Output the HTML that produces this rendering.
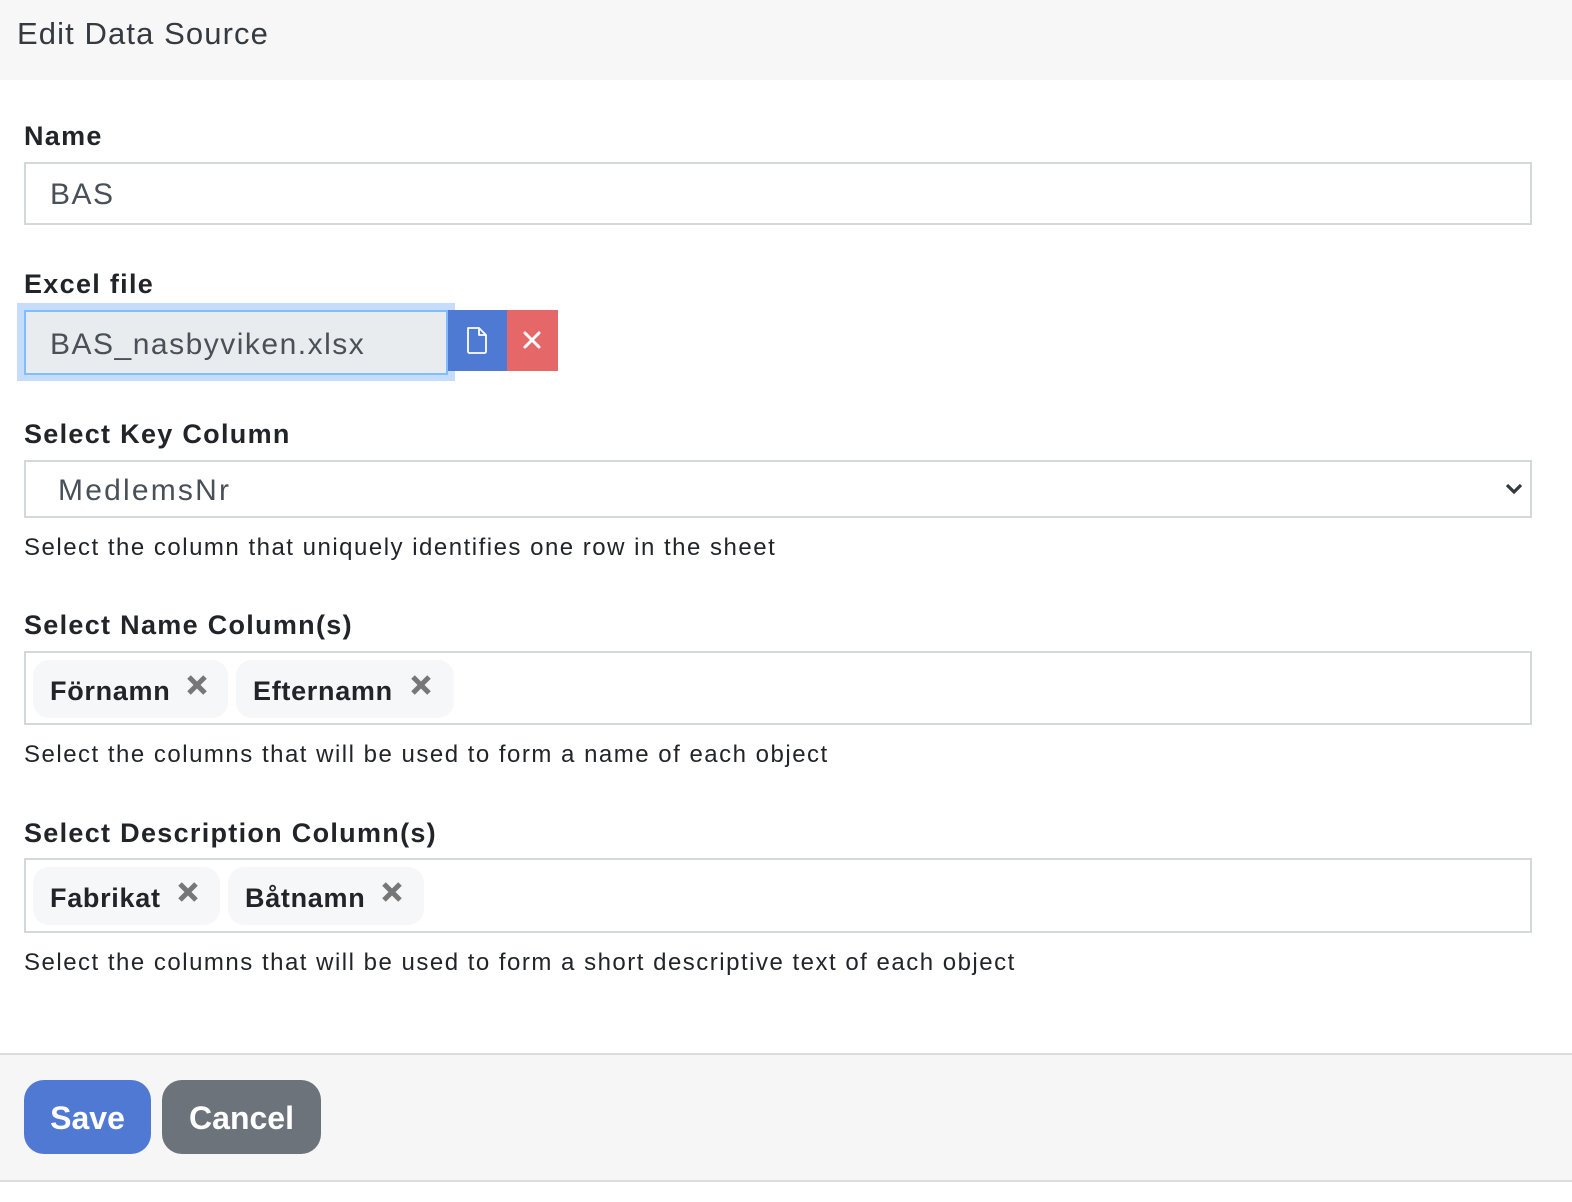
<!DOCTYPE html>
<html><head><meta charset="utf-8"><style>
*{box-sizing:border-box;margin:0;padding:0}
body{width:1572px;height:1202px;background:#fff;font-family:"Liberation Sans",sans-serif;color:#212529;position:relative;overflow:hidden}
.abs{position:absolute}
.hdr{left:0;top:0;width:1572px;height:80px;background:#f7f7f7}
.title{left:17px;top:16px;font-size:31px;color:#343a40;letter-spacing:1.1px}
.lbl{left:24px;font-size:27px;font-weight:bold;color:#212529;letter-spacing:1.3px}
.inp{left:24px;width:1508px;border:2px solid #d5d8db;background:#fff}
.help{left:24px;font-size:24px;color:#212529;letter-spacing:1.5px}
.tag{background:#f6f7f9;border-radius:16px;height:58px;font-size:27px;font-weight:bold;color:#212529;padding:16px 0 0 17px;white-space:nowrap;letter-spacing:0.7px}
.x{position:absolute;top:13px;width:24px;height:24px}
.btn{top:1080px;height:74px;border-radius:20px;color:#fff;font-size:32px;font-weight:bold;text-align:center;line-height:76px}
</style></head><body>
<div class="abs hdr"></div>
<div class="abs title">Edit Data Source</div>

<div class="abs lbl" style="top:121px">Name</div>
<div class="abs inp" style="top:162px;height:63px"></div>
<div class="abs" style="left:50px;top:178px;font-size:30px;color:#495057;letter-spacing:1.5px">BAS</div>

<div class="abs lbl" style="top:269px">Excel file</div>
<div class="abs" style="left:17px;top:303px;width:438px;height:78px;background:#c6dcfb"></div>
<div class="abs" style="left:24px;top:310px;width:424px;height:65px;background:#e9ecef;border:2px solid #80bdff"></div>
<div class="abs" style="left:50px;top:328px;font-size:30px;color:#495057;letter-spacing:1.5px">BAS_nasbyviken.xlsx</div>
<div class="abs" style="left:448px;top:310px;width:59px;height:61px;background:#4f7ad4"></div>
<svg class="abs" style="left:466px;top:326px" width="22" height="28" viewBox="0 0 22 28"><path d="M2 2h11l7 7v16.5a1.5 1.5 0 0 1-1.5 1.5h-15A1.5 1.5 0 0 1 2 25.5z M13 2v7h7" fill="none" stroke="#fff" stroke-width="1.8" stroke-linejoin="round"/></svg>
<div class="abs" style="left:507px;top:310px;width:51px;height:61px;background:#e56767"></div>
<svg class="abs" style="left:523px;top:331px" width="18" height="18" viewBox="0 0 18 18"><path d="M2 2L16 16M16 2L2 16" stroke="#fff" stroke-width="3" stroke-linecap="round"/></svg>

<div class="abs lbl" style="top:419px">Select Key Column</div>
<div class="abs inp" style="top:460px;height:58px"></div>
<div class="abs" style="left:58px;top:474px;font-size:30px;color:#495057;letter-spacing:2.2px">MedlemsNr</div>
<svg class="abs" style="left:1504px;top:482px" width="20" height="14" viewBox="0 0 20 14"><path d="M3 3L10 10L17 3" fill="none" stroke="#343a40" stroke-width="3.2"/></svg>
<div class="abs help" style="top:534px">Select the column that uniquely identifies one row in the sheet</div>

<div class="abs lbl" style="top:610px">Select Name Column(s)</div>
<div class="abs inp" style="top:651px;height:74px"></div>
<div class="abs tag" style="left:33px;top:660px;width:195px">Förnamn<svg class="x" style="left:152px" viewBox="0 0 24 24"><path d="M4 4L20 20M20 4L4 20" stroke="#777" stroke-width="5"/></svg></div>
<div class="abs tag" style="left:236px;top:660px;width:218px">Efternamn<svg class="x" style="left:173px" viewBox="0 0 24 24"><path d="M4 4L20 20M20 4L4 20" stroke="#777" stroke-width="5"/></svg></div>
<div class="abs help" style="top:741px">Select the columns that will be used to form a name of each object</div>

<div class="abs lbl" style="top:818px">Select Description Column(s)</div>
<div class="abs inp" style="top:858px;height:75px"></div>
<div class="abs tag" style="left:33px;top:867px;width:187px">Fabrikat<svg class="x" style="left:143px" viewBox="0 0 24 24"><path d="M4 4L20 20M20 4L4 20" stroke="#777" stroke-width="5"/></svg></div>
<div class="abs tag" style="left:228px;top:867px;width:196px">Båtnamn<svg class="x" style="left:152px" viewBox="0 0 24 24"><path d="M4 4L20 20M20 4L4 20" stroke="#777" stroke-width="5"/></svg></div>
<div class="abs help" style="top:949px">Select the columns that will be used to form a short descriptive text of each object</div>

<div class="abs" style="left:0;top:1053px;width:1572px;height:129px;background:#f6f6f6;border-top:2px solid #dcdcdc;border-bottom:2px solid #dcdcdc"></div>
<div class="abs btn" style="left:24px;width:127px;background:#5079d4">Save</div>
<div class="abs btn" style="left:162px;width:159px;background:#6c737a">Cancel</div>
</body></html>
